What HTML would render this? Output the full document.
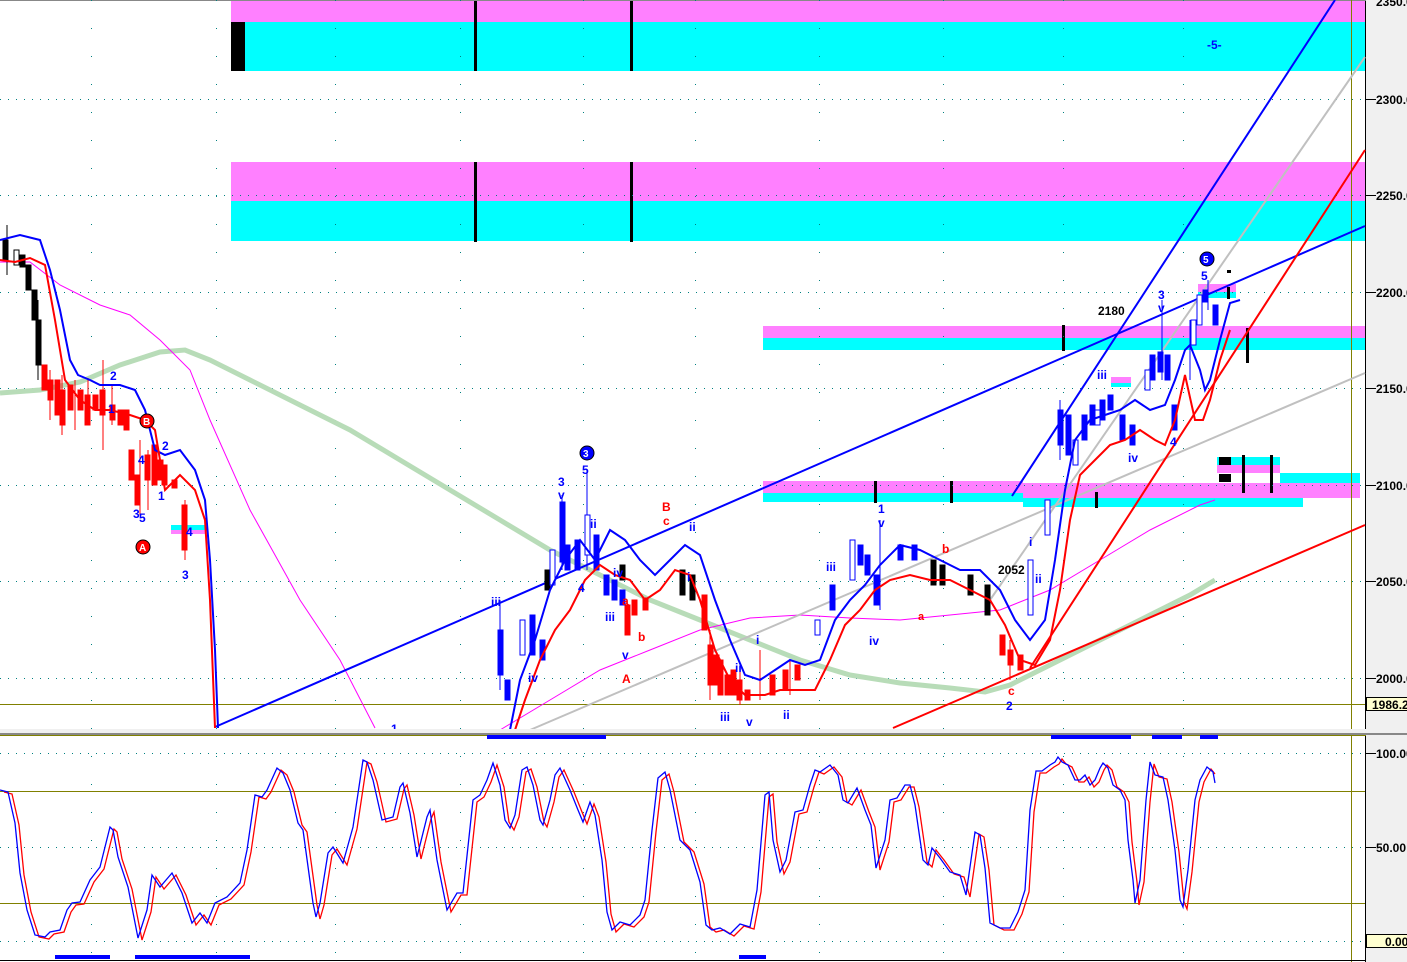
<!DOCTYPE html>
<html><head><meta charset="utf-8"><style>
html,body{margin:0;padding:0;background:#fff;width:1407px;height:962px;overflow:hidden}
svg{display:block}
text{font-family:"Liberation Sans",sans-serif;font-weight:bold}
</style></head><body>
<svg width="1407" height="962" viewBox="0 0 1407 962" xmlns="http://www.w3.org/2000/svg">
<rect x="0" y="0" width="1407" height="962" fill="#fff"/>
<rect x="1366" y="0" width="41" height="962" fill="#f0f0f0"/>
<line x1="1365.5" y1="0" x2="1365.5" y2="962" stroke="#000" stroke-width="1"/>
<line x1="0" y1="0.5" x2="1366" y2="0.5" stroke="#888" stroke-width="1"/>
<rect x="231" y="1" width="1134" height="21" fill="#ff80ff"/>
<rect x="231" y="22" width="1134" height="49" fill="#00ffff"/>
<rect x="231" y="22" width="14" height="49" fill="#000"/>
<rect x="474" y="1" width="3" height="70" fill="#000"/>
<rect x="630" y="1" width="3" height="70" fill="#000"/>
<text x="1207" y="49" fill="#0000ff" font-size="12" font-weight="normal">-5-</text>
<rect x="231" y="162" width="1134" height="39" fill="#ff80ff"/>
<rect x="231" y="201" width="1134" height="40" fill="#00ffff"/>
<rect x="474" y="162" width="3" height="80" fill="#000"/>
<rect x="630" y="162" width="3" height="80" fill="#000"/>
<rect x="763" y="326" width="602" height="12" fill="#ff80ff"/>
<rect x="763" y="338" width="602" height="12" fill="#00ffff"/>
<rect x="1062" y="325" width="3" height="26" fill="#000"/>
<rect x="1246" y="328" width="3" height="35" fill="#000"/>
<rect x="763" y="481" width="260" height="12" fill="#ff80ff"/>
<rect x="763" y="493" width="260" height="9" fill="#00ffff"/>
<rect x="1023" y="483" width="337" height="15" fill="#ff80ff"/>
<rect x="1023" y="498" width="280" height="9" fill="#00ffff"/>
<rect x="1217" y="457" width="63" height="8" fill="#00ffff"/>
<rect x="1217" y="465" width="63" height="8" fill="#ff80ff"/>
<rect x="1280" y="473" width="80" height="10" fill="#00ffff"/>
<rect x="1219" y="457" width="12" height="8" fill="#000"/>
<rect x="1219" y="474" width="12" height="8" fill="#000"/>
<rect x="1242" y="455" width="3" height="38" fill="#000"/>
<rect x="1270" y="455" width="3" height="38" fill="#000"/>
<rect x="874" y="481" width="3" height="22" fill="#000"/>
<rect x="950" y="481" width="3" height="22" fill="#000"/>
<rect x="1095" y="492" width="3" height="16" fill="#000"/>
<rect x="1198" y="284" width="38" height="8" fill="#ff80ff"/>
<rect x="1198" y="292" width="38" height="6" fill="#00ffff"/>
<rect x="1227" y="287" width="3" height="12" fill="#000"/>
<rect x="1227" y="270" width="4" height="3" fill="#000"/>
<rect x="1111" y="377" width="20" height="6" fill="#ff80ff"/>
<rect x="1111" y="383" width="20" height="4" fill="#00ffff"/>
<rect x="171" y="525" width="34" height="5" fill="#00ffff"/>
<rect x="171" y="530" width="34" height="4" fill="#ff80ff"/>
<g stroke="#008080" stroke-width="1" stroke-dasharray="1,7">
<line x1="0" y1="99.5" x2="1365" y2="99.5"/><line x1="0" y1="195.5" x2="1365" y2="195.5"/>
<line x1="0" y1="292.5" x2="1365" y2="292.5"/><line x1="0" y1="388.5" x2="1365" y2="388.5"/>
<line x1="0" y1="485.5" x2="1365" y2="485.5"/><line x1="0" y1="581.5" x2="1365" y2="581.5"/>
<line x1="0" y1="678.5" x2="1365" y2="678.5"/>
<line x1="0" y1="753.5" x2="1365" y2="753.5"/><line x1="0" y1="847.5" x2="1365" y2="847.5"/>
<line x1="0" y1="941.5" x2="1365" y2="941.5"/>
</g>
<g stroke="#008080" stroke-width="1" stroke-dasharray="1,27">
<line x1="91.5" y1="0" x2="91.5" y2="960"/><line x1="216.5" y1="0" x2="216.5" y2="960"/>
<line x1="335.5" y1="0" x2="335.5" y2="960"/><line x1="460.5" y1="0" x2="460.5" y2="960"/>
<line x1="583.5" y1="0" x2="583.5" y2="960"/><line x1="695.5" y1="0" x2="695.5" y2="960"/>
<line x1="819.5" y1="0" x2="819.5" y2="960"/><line x1="943.5" y1="0" x2="943.5" y2="960"/>
<line x1="1063.5" y1="0" x2="1063.5" y2="960"/><line x1="1183.5" y1="0" x2="1183.5" y2="960"/>
</g>
<line x1="0" y1="704.5" x2="1365" y2="704.5" stroke="#808000"/>
<line x1="0" y1="791.5" x2="1365" y2="791.5" stroke="#808000"/>
<line x1="0" y1="903.5" x2="1365" y2="903.5" stroke="#808000"/>
<line x1="1351.5" y1="0" x2="1351.5" y2="962" stroke="#808000"/>
<polyline fill="none" stroke="#b8dcb8" stroke-width="5" points="0,393 40,390 80,382 120,365 160,352 185,350 210,360 250,380 300,405 350,430 400,460 450,490 500,520 550,550 600,575 650,600 700,620 750,640 800,660 850,675 900,683 950,688 985,692 1010,685 1050,665 1100,640 1150,615 1190,595 1215,580"/>
<polyline fill="none" stroke="#ff00ff" stroke-width="1" points="0,262 30,262 60,285 100,305 130,315 160,340 190,370 210,420 250,510 300,600 340,660 375,728"/>
<polyline fill="none" stroke="#ff00ff" stroke-width="1" points="500,730 550,700 600,670 650,650 700,630 750,618 800,615 850,618 900,620 950,615 1000,610 1050,590 1100,560 1150,530 1200,505 1215,500"/>
<line x1="215" y1="727" x2="1365" y2="226" stroke="#0000ff" stroke-width="2"/>
<line x1="1012" y1="496" x2="1335" y2="0" stroke="#0000ff" stroke-width="2"/>
<line x1="530" y1="730" x2="1365" y2="373" stroke="#c0c0c0" stroke-width="2"/>
<line x1="990" y1="600" x2="1365" y2="57" stroke="#c0c0c0" stroke-width="2"/>
<line x1="1030" y1="668" x2="1365" y2="150" stroke="#ff0000" stroke-width="2"/>
<line x1="893" y1="728" x2="1365" y2="525" stroke="#ff0000" stroke-width="2"/>
<!-- wicks -->
<g stroke-width="1">
<g stroke="#ff0000"><line x1="50" y1="370" x2="50" y2="420"/><line x1="62" y1="375" x2="62" y2="435"/><line x1="75" y1="380" x2="75" y2="430"/><line x1="88" y1="378" x2="88" y2="420"/><line x1="103" y1="360" x2="103" y2="450"/><line x1="112" y1="385" x2="112" y2="425"/><line x1="140" y1="440" x2="140" y2="515"/><line x1="148" y1="450" x2="148" y2="510"/><line x1="185" y1="500" x2="185" y2="560"/><line x1="710" y1="630" x2="710" y2="700"/><line x1="740" y1="670" x2="740" y2="705"/><line x1="760" y1="650" x2="760" y2="700"/><line x1="790" y1="660" x2="790" y2="695"/><line x1="1010" y1="640" x2="1010" y2="680"/></g>
<g stroke="#0000ff"><line x1="500" y1="600" x2="500" y2="690"/><line x1="587" y1="470" x2="587" y2="570"/><line x1="562" y1="495" x2="562" y2="570"/><line x1="880" y1="520" x2="880" y2="610"/><line x1="1060" y1="400" x2="1060" y2="460"/><line x1="1162" y1="300" x2="1162" y2="380"/><line x1="1190" y1="320" x2="1190" y2="380"/><line x1="1208" y1="280" x2="1208" y2="310"/></g>
<g stroke="#000"><line x1="7" y1="225" x2="7" y2="275"/><line x1="38" y1="300" x2="38" y2="380"/></g>
</g>
<g fill="#000" stroke="#000">
<rect x="3" y="240" width="5" height="20"/><rect x="14" y="250" width="5" height="15" fill="#fff"/><rect x="20" y="255" width="5" height="12"/><rect x="26" y="265" width="5" height="25"/><rect x="32" y="290" width="5" height="30"/><rect x="36" y="320" width="5" height="45"/>
<rect x="931" y="560" width="5" height="25"/><rect x="940" y="565" width="5" height="20"/><rect x="968" y="575" width="5" height="20"/><rect x="985" y="585" width="5" height="30"/><rect x="680" y="570" width="5" height="25"/><rect x="690" y="575" width="5" height="25"/><rect x="545" y="570" width="5" height="20"/><rect x="620" y="565" width="5" height="15"/>
</g>
<g fill="#ff0000" stroke="#ff0000">
<rect x="42" y="365" width="5" height="25"/><rect x="48" y="380" width="5" height="20"/><rect x="55" y="380" width="5" height="35"/><rect x="60" y="390" width="5" height="35"/><rect x="68" y="385" width="5" height="25"/><rect x="78" y="390" width="5" height="20"/><rect x="85" y="395" width="5" height="30"/><rect x="93" y="395" width="5" height="15"/><rect x="100" y="390" width="5" height="25"/><rect x="110" y="405" width="5" height="15"/><rect x="118" y="410" width="5" height="15"/><rect x="124" y="410" width="5" height="20"/>
<rect x="129" y="450" width="5" height="30"/><rect x="135" y="475" width="5" height="30"/><rect x="145" y="455" width="5" height="25"/><rect x="152" y="445" width="5" height="40"/><rect x="158" y="460" width="5" height="20"/><rect x="162" y="465" width="5" height="20"/><rect x="172" y="480" width="5" height="8"/><rect x="182" y="505" width="5" height="45"/>
<rect x="625" y="605" width="5" height="30"/><rect x="632" y="600" width="5" height="15"/><rect x="643" y="598" width="5" height="12"/><rect x="702" y="595" width="5" height="35"/><rect x="708" y="645" width="5" height="40"/><rect x="714" y="655" width="5" height="30"/><rect x="718" y="660" width="5" height="35"/><rect x="725" y="675" width="5" height="20"/><rect x="731" y="670" width="5" height="25"/><rect x="737" y="680" width="5" height="20"/><rect x="745" y="690" width="5" height="10"/>
<rect x="770" y="675" width="5" height="20"/><rect x="783" y="670" width="5" height="20"/><rect x="795" y="665" width="5" height="15"/><rect x="1000" y="635" width="5" height="20"/><rect x="1008" y="650" width="5" height="15"/><rect x="1018" y="655" width="5" height="15"/>
</g>
<g fill="#0000ff" stroke="#0000ff">
<rect x="498" y="630" width="5" height="45"/><rect x="505" y="680" width="5" height="20"/><rect x="530" y="615" width="5" height="40"/><rect x="540" y="640" width="5" height="20"/><rect x="560" y="502" width="5" height="60"/><rect x="565" y="545" width="5" height="25"/><rect x="575" y="540" width="5" height="30"/><rect x="594" y="535" width="5" height="35"/><rect x="604" y="575" width="5" height="20"/><rect x="612" y="580" width="5" height="20"/><rect x="620" y="590" width="5" height="15"/>
<rect x="830" y="585" width="5" height="25"/><rect x="858" y="545" width="5" height="20"/><rect x="865" y="555" width="5" height="20"/><rect x="874" y="575" width="5" height="30"/><rect x="898" y="545" width="5" height="15"/><rect x="912" y="545" width="5" height="15"/><rect x="1058" y="410" width="5" height="35"/><rect x="1066" y="415" width="5" height="40"/><rect x="1082" y="415" width="5" height="25"/><rect x="1090" y="405" width="5" height="20"/><rect x="1100" y="400" width="5" height="20"/><rect x="1108" y="395" width="5" height="15"/><rect x="1120" y="415" width="5" height="25"/><rect x="1130" y="425" width="5" height="20"/><rect x="1150" y="355" width="5" height="25"/><rect x="1158" y="352" width="5" height="20"/><rect x="1165" y="355" width="5" height="25"/><rect x="1172" y="405" width="5" height="25"/><rect x="1203" y="290" width="5" height="12"/><rect x="1213" y="305" width="5" height="20"/>
</g>
<g fill="#fff" stroke="#0000ff">
<rect x="520" y="620" width="5" height="35"/><rect x="550" y="550" width="5" height="35"/><rect x="585" y="515" width="5" height="40"/><rect x="815" y="620" width="5" height="15"/><rect x="850" y="540" width="5" height="40"/><rect x="1028" y="560" width="5" height="55"/><rect x="1045" y="500" width="5" height="35"/><rect x="1073" y="440" width="5" height="25"/><rect x="1095" y="410" width="5" height="15"/><rect x="1145" y="370" width="5" height="20"/><rect x="1191" y="320" width="5" height="25"/><rect x="1197" y="295" width="5" height="30"/>
</g>
<polyline fill="none" stroke="#0000ff" stroke-width="2" points="0,240 20,235 40,240 50,270 60,310 70,360 78,375 90,380 100,385 120,385 135,390 145,410 155,450 165,455 180,450 195,470 205,500 210,560 215,650 218,728"/>
<polyline fill="none" stroke="#ff0000" stroke-width="2" points="0,260 15,262 30,258 45,265 55,320 65,380 80,400 95,410 110,410 130,415 145,420 155,430 165,490 180,475 195,490 205,520 210,600 215,728"/>
<polyline fill="none" stroke="#0000ff" stroke-width="2" points="510,730 520,680 535,640 550,590 565,560 580,540 595,560 610,530 625,540 640,560 655,575 670,560 685,545 700,555 715,600 730,640 745,675 760,680 775,670 790,660 805,665 820,660 835,620 850,600 865,585 880,565 900,545 920,550 940,560 960,570 980,570 1000,590 1015,620 1030,640 1045,620 1055,560 1065,490 1075,440 1090,420 1105,415 1120,410 1135,400 1150,410 1165,405 1175,380 1185,350 1190,345 1200,370 1205,390 1210,380 1220,340 1230,303 1240,300"/>
<polyline fill="none" stroke="#ff0000" stroke-width="2" points="515,730 525,700 540,660 555,630 570,610 585,580 600,565 615,575 630,580 645,600 660,590 675,570 690,575 700,600 715,650 730,680 745,695 765,695 780,690 800,690 815,690 830,660 845,625 860,610 875,590 890,580 910,575 930,580 950,580 970,590 990,600 1005,625 1020,660 1035,665 1050,640 1060,590 1070,520 1080,475 1095,460 1110,445 1125,440 1140,430 1155,440 1165,445 1175,420 1185,375 1195,420 1203,420 1210,400 1220,360 1230,330"/>
<g fill="#0000ff" font-size="12">
<text x="110" y="380">2</text><text x="108" y="413">1</text><text x="162" y="450">2</text><text x="138" y="464">4</text><text x="133" y="518">3</text><text x="139" y="522">5</text><text x="158" y="500">1</text><text x="186" y="536">4</text><text x="182" y="579">3</text>
<text x="491" y="606">iii</text><text x="528" y="682">iv</text><text x="558" y="486">3</text><text x="558" y="499">v</text><text x="582" y="474">5</text><text x="590" y="528">ii</text><text x="578" y="592">4</text><text x="613" y="577">iv</text><text x="605" y="621">iii</text><text x="622" y="659">v</text>
<text x="689" y="531">ii</text><text x="687" y="581">i</text><text x="720" y="721">iii</text><text x="746" y="726">v</text><text x="735" y="672">ii</text><text x="756" y="644">i</text><text x="783" y="719">ii</text>
<text x="878" y="513">1</text><text x="878" y="527">v</text><text x="826" y="571">iii</text><text x="869" y="645">iv</text><text x="1029" y="546">i</text><text x="1035" y="583">ii</text><text x="1006" y="710">2</text>
<text x="1097" y="379">iii</text><text x="1128" y="462">iv</text><text x="1158" y="299">3</text><text x="1158" y="312">v</text><text x="1170" y="446">4</text><text x="1201" y="280">5</text><text x="391" y="733">1</text>
</g>
<g fill="#ff0000" font-size="12">
<text x="662" y="511">B</text><text x="663" y="525">c</text><text x="622" y="683">A</text><text x="638" y="641">b</text><text x="622" y="605">a</text><text x="942" y="553">b</text><text x="918" y="620" font-size="11">a</text><text x="1008" y="695">c</text>
</g>
<g fill="#000" font-size="12"><text x="1098" y="315">2180</text><text x="998" y="574">2052</text></g>
<circle cx="147" cy="421" r="7" fill="#ff0000" stroke="#000"/><text x="143" y="425" fill="#fff" font-size="10">B</text>
<circle cx="143" cy="547" r="7" fill="#ff0000" stroke="#000"/><text x="139" y="551" fill="#fff" font-size="10">A</text>
<circle cx="587" cy="453" r="7" fill="#0000ff" stroke="#000"/><text x="583" y="457" fill="#fff" font-size="10">3</text>
<circle cx="1207" cy="259" r="7" fill="#0000ff" stroke="#000"/><text x="1203" y="263" fill="#fff" font-size="10">5</text>
<rect x="0" y="729" width="1366" height="4" fill="#f0f0f0"/>
<rect x="0" y="733" width="1407" height="2" fill="#888"/>
<rect x="0" y="735" width="1366" height="1" fill="#808000"/>
<g fill="#0000ff"><rect x="487" y="735" width="119" height="4"/><rect x="1051" y="735" width="80" height="4"/><rect x="1152" y="735" width="30" height="4"/><rect x="1200" y="735" width="18" height="4"/><rect x="55" y="955" width="55" height="4"/><rect x="135" y="955" width="115" height="4"/><rect x="739" y="955" width="27" height="4"/></g>
<polyline fill="none" stroke="#ff0000" stroke-width="1.3" transform="translate(4,2)" points="0,790 8,792 15,823 20,873 27,910 35,935 45,937 50,932 60,930 67,910 72,903 80,902 90,880 100,867 110,827 113,830 118,857 128,887 138,938 147,910 152,875 160,887 172,873 182,893 192,923 200,913 207,923 215,903 227,897 240,883 247,850 255,795 262,797 267,790 277,768 283,773 290,790 298,823 303,830 313,903 316,917 320,903 328,853 333,847 343,863 353,827 363,760 367,762 373,780 382,820 393,817 400,787 403,783 410,813 417,857 427,817 430,810 437,860 447,910 457,893 463,893 473,800 480,795 487,780 493,763 500,785 505,820 510,828 515,815 522,770 527,767 533,785 540,820 543,825 550,800 555,775 560,768 570,790 578,810 583,822 590,802 595,815 602,860 607,912 612,930 620,922 630,925 640,915 645,900 652,830 658,778 665,772 670,790 680,840 690,850 700,882 706,925 712,930 720,928 730,934 740,924 750,927 757,890 765,795 769,792 773,840 780,872 786,860 795,812 803,810 810,785 815,770 820,772 830,765 838,775 843,800 848,803 857,788 865,810 871,825 876,868 885,840 890,800 897,798 905,785 910,785 915,805 923,860 928,865 932,848 940,858 950,872 960,875 966,895 975,832 980,835 985,868 990,923 1000,928 1010,928 1018,912 1025,890 1030,810 1036,771 1042,771 1050,765 1055,762 1058,757 1062,762 1068,765 1075,780 1080,780 1085,775 1090,785 1095,780 1100,768 1103,763 1108,768 1113,785 1120,790 1125,800 1128,840 1133,880 1135,903 1140,880 1146,800 1150,762 1155,775 1163,777 1168,800 1175,850 1180,900 1183,907 1188,870 1195,800 1200,780 1207,767 1211,772"/>
<polyline fill="none" stroke="#0000ff" stroke-width="1.3" points="0,790 8,792 15,823 20,873 27,910 35,935 45,937 50,932 60,930 67,910 72,903 80,902 90,880 100,867 110,827 113,830 118,857 128,887 138,938 147,910 152,875 160,887 172,873 182,893 192,923 200,913 207,923 215,903 227,897 240,883 247,850 255,795 262,797 267,790 277,768 283,773 290,790 298,823 303,830 313,903 316,917 320,903 328,853 333,847 343,863 353,827 363,760 367,762 373,780 382,820 393,817 400,787 403,783 410,813 417,857 427,817 430,810 437,860 447,910 457,893 463,893 473,800 480,795 487,780 493,763 500,785 505,820 510,828 515,815 522,770 527,767 533,785 540,820 543,825 550,800 555,775 560,768 570,790 578,810 583,822 590,802 595,815 602,860 607,912 612,930 620,922 630,925 640,915 645,900 652,830 658,778 665,772 670,790 680,840 690,850 700,882 706,925 712,930 720,928 730,934 740,924 750,927 757,890 765,795 769,792 773,840 780,872 786,860 795,812 803,810 810,785 815,770 820,772 830,765 838,775 843,800 848,803 857,788 865,810 871,825 876,868 885,840 890,800 897,798 905,785 910,785 915,805 923,860 928,865 932,848 940,858 950,872 960,875 966,895 975,832 980,835 985,868 990,923 1000,928 1010,928 1018,912 1025,890 1030,810 1036,771 1042,771 1050,765 1055,762 1058,757 1062,762 1068,765 1075,780 1080,780 1085,775 1090,785 1095,780 1100,768 1103,763 1108,768 1113,785 1120,790 1125,800 1128,840 1133,880 1135,903 1140,880 1146,800 1150,762 1155,775 1163,777 1168,800 1175,850 1180,900 1183,907 1188,870 1195,800 1200,780 1207,767 1213,772 1215,783"/>
<line x1="0" y1="960.5" x2="1366" y2="960.5" stroke="#000"/>
<g stroke="#000" stroke-width="1">
<line x1="1366" y1="99.5" x2="1376" y2="99.5"/><line x1="1366" y1="195.5" x2="1376" y2="195.5"/><line x1="1366" y1="292.5" x2="1376" y2="292.5"/><line x1="1366" y1="388.5" x2="1376" y2="388.5"/><line x1="1366" y1="485.5" x2="1376" y2="485.5"/><line x1="1366" y1="581.5" x2="1376" y2="581.5"/><line x1="1366" y1="678.5" x2="1376" y2="678.5"/><line x1="1366" y1="753.5" x2="1376" y2="753.5"/><line x1="1366" y1="847.5" x2="1376" y2="847.5"/>
</g>
<g fill="#000" font-size="12">
<text x="1376" y="6">2350.0</text><text x="1376" y="104">2300.0</text><text x="1376" y="200">2250.0</text><text x="1376" y="297">2200.0</text><text x="1376" y="393">2150.0</text><text x="1376" y="490">2100.0</text><text x="1376" y="586">2050.0</text><text x="1376" y="683">2000.0</text><text x="1376" y="758">100.00</text><text x="1376" y="852">50.00</text>
</g>
<rect x="1366.5" y="697.5" width="41" height="13" fill="#ffffd0" stroke="#000"/><text x="1372" y="709" font-size="12" fill="#000">1986.2</text>
<rect x="1366.5" y="934.5" width="41" height="13" fill="#ffffd0" stroke="#000"/><text x="1385" y="946" font-size="12" fill="#000">0.00</text>
</svg>
</body></html>
